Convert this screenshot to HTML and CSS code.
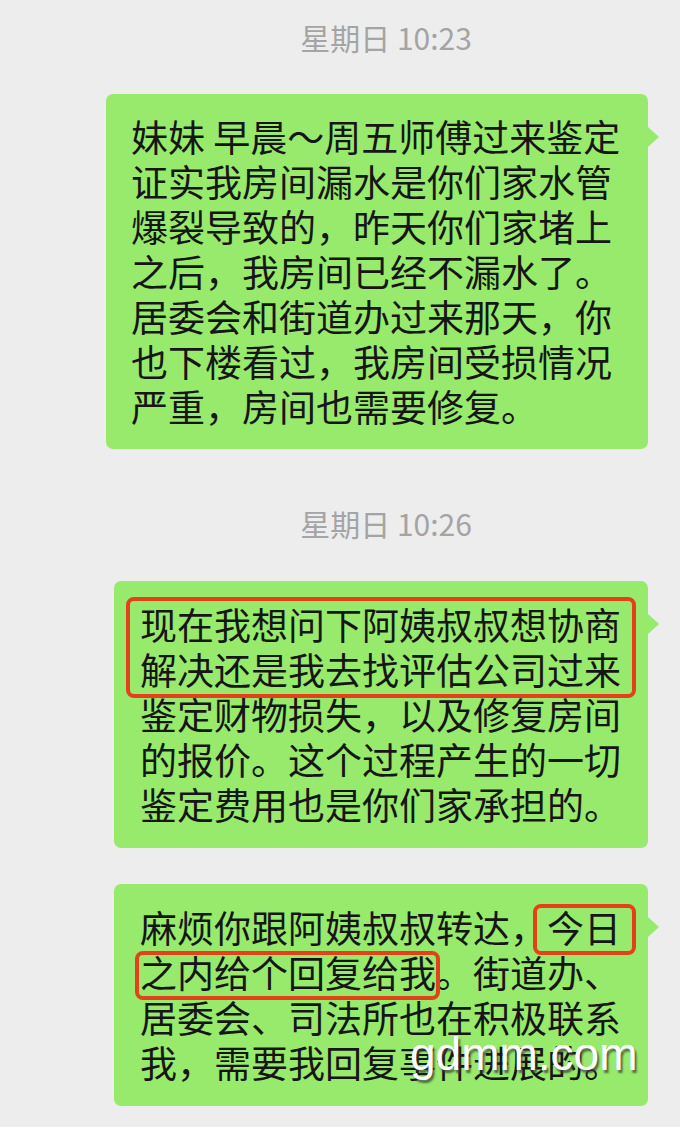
FILE: index.html
```html
<!DOCTYPE html>
<html>
<head>
  <meta charset="UTF-8">
  <title>聊天记录</title>
  <link rel="stylesheet" href="styles.css">
</head>
<body>
  <div class="chat">
    <div class="time">星期日 10:23</div>
    <div class="msg">
      <div class="bubble first">
        <div class="text">妹妹 早晨～周五师傅过来鉴定证实我房间漏水是你们家水管爆裂导致的，昨天你们家堵上之后，我房间已经不漏水了。居委会和街道办过来那天，你也下楼看过，我房间受损情况严重，房间也需要修复。</div>
      </div>
    </div>

    <div class="time">星期日 10:26</div>
    <div class="msg">
      <div class="bubble">
        <div class="text">
          <div class="mark-block">现在我想问下阿姨叔叔想协商解决还是我去找评估公司过来</div>
          鉴定财物损失，以及修复房间的报价。这个过程产生的一切鉴定费用也是你们家承担的。
        </div>
      </div>
    </div>

    <div class="msg last">
      <div class="bubble">
        <div class="text">麻烦你跟阿姨叔叔转达，<span class="mark mark-today">今日</span><span class="mark mark-reply">之内给个回复给我</span>。街道办、居委会、司法所也在积极联系我，需要我回复事件进展的。</div>
      </div>
    </div>
  </div>

  <div class="watermark">gdmm.com</div>
</body>
</html>
```

FILE: styles.css
```css
body {
  margin: 0;
  background-color: #ededed;
  font-family: "Noto Sans CJK SC", "Noto Sans", sans-serif;
  color: #161616;
}
* {
  box-sizing: border-box;
}
.chat {
  padding: 17px 0 0 0;
}
.time {
  padding-left: 92px;
  text-align: center;
  font-size: 30px;
  line-height: 40px;
  color: #a4a4a4;
}
.msg {
  display: flex;
  justify-content: flex-end;
  padding-right: 32px;
  margin: 37px 0 54px 0;
}
.msg + .time + .msg {
  margin-top: 38px;
  margin-bottom: 36px;
}
.msg.last {
  margin: 0;
}
.bubble {
  position: relative;
  background-color: #97ea6b;
  border-radius: 7px;
  padding: 21px 8px 21px 26px;
}
.bubble.first {
  padding: 20px 17px 20px 25px;
}
.bubble::after {
  content: "";
  position: absolute;
  right: -11px;
  top: 33px;
  border-left: 11px solid #97ea6b;
  border-top: 10px solid transparent;
  border-bottom: 10px solid transparent;
}
.text {
  width: 500px;
  font-size: 37px;
  line-height: 45px;
}
.mark-block {
  margin: -5px 4px -5.5px -14px;
  padding: 1px 8px 1.5px 10px;
  border: 4px solid #e4401a;
  border-radius: 8px;
}
.mark {
  position: relative;
}
.mark::after {
  content: "";
  position: absolute;
  border: 4px solid #e4401a;
  border-radius: 8px;
}
.mark-today::after {
  left: -14px;
  right: -15px;
  top: 4px;
  bottom: -1px;
}
.mark-reply::after {
  left: -5px;
  right: -4px;
  top: 6px;
  bottom: -1px;
}
.watermark {
  position: absolute;
  left: 410px;
  top: 1027px;
  font-family: "Liberation Sans", Arial, sans-serif;
  font-size: 46px;
  color: #ffffff;
  text-shadow: 2px 3px 2px rgba(60, 60, 60, 0.75);
}
```
